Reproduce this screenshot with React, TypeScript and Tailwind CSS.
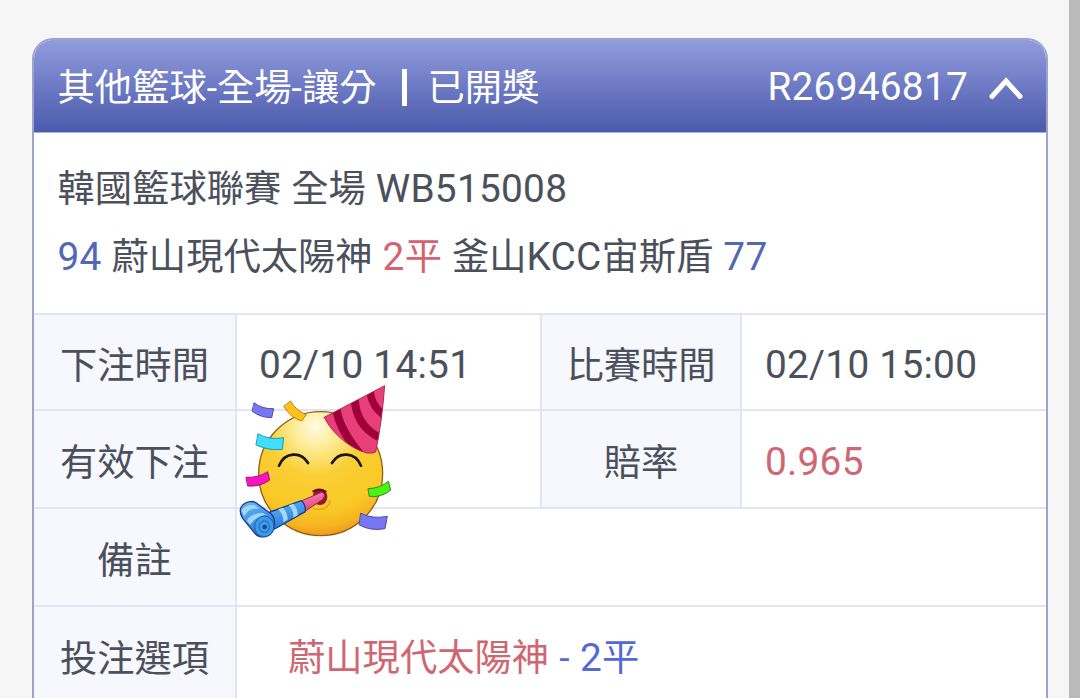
import type { ReactNode } from "react";
import clsx from "clsx";

function Latin({ children }: { children: ReactNode }) {
  return <span className="text-[38.8px] tracking-[0.25px]">{children}</span>;
}

function Label({ children, divided }: { children: ReactNode; divided?: boolean }) {
  return (
    <div
      className={clsx(
        "flex items-center justify-center border-t-2 border-[#e2e5f1] bg-[#f6f8fd] pt-[10px]",
        divided && "border-l-2",
      )}
    >
      {children}
    </div>
  );
}

function Value({ children, className }: { children?: ReactNode; className?: string }) {
  return (
    <div className={clsx("relative flex items-center border-l-2 border-t-2 border-[#e2e5f1] pt-1.5", className)}>
      {children}
    </div>
  );
}

function PartyFace() {
  return (
    <svg
      viewBox="0 0 540 510"
      className="pointer-events-none absolute -left-[7px] -top-9 z-10 h-[170px] w-[180px] max-w-none"
      strokeLinejoin="round"
      strokeLinecap="round"
    >
      <defs>
        <radialGradient id="face" cx="0.46" cy="0.12" r="0.94">
          <stop offset="0" stopColor="#fffbe0" />
          <stop offset="0.2" stopColor="#fdeb92" />
          <stop offset="0.42" stopColor="#f9cf34" />
          <stop offset="0.72" stopColor="#f9c926" />
          <stop offset="0.86" stopColor="#f7b321" />
          <stop offset="1" stopColor="#ea8212" />
        </radialGradient>
        <linearGradient id="blower" x1="0" y1="0" x2="0.4" y2="1">
          <stop offset="0" stopColor="#6db9f5" />
          <stop offset="1" stopColor="#247bdc" />
        </linearGradient>
        <linearGradient id="tip" x1="0" y1="0" x2="0.4" y2="1">
          <stop offset="0" stopColor="#fb93b8" />
          <stop offset="1" stopColor="#df3f7c" />
        </linearGradient>
        <clipPath id="hat">
          <path d="M283 127 L464 32 Q456 140 437 231 Q428 236 410 234 C366 222 308 180 283 127Z" />
        </clipPath>
      </defs>

      <circle cx="272" cy="296" r="186" fill="url(#face)" stroke="#8f6215" strokeWidth="4" />

      <g clipPath="url(#hat)">
        <rect x="275" y="25" width="200" height="220" fill="#e83f78" />
        <g fill="none" stroke="#9f0038" strokeLinecap="butt">
          <path d="M318 98 C325 145 350 190 389 236" strokeWidth="25" />
          <path d="M374 70 C376 120 400 162 447 187" strokeWidth="24" />
          <path d="M420 48 C424 85 440 107 468 124" strokeWidth="22" />
        </g>
      </g>
      <path
        d="M283 127 L464 32 Q456 140 437 231 Q428 236 410 234 C366 222 308 180 283 127Z"
        fill="none"
        stroke="#b02a58"
        strokeWidth="3"
      />

      <g fill="none" stroke="#211509" strokeWidth="8">
        <path d="M147 272 C165 229 214 229 234 264" />
        <path d="M306 264 C326 229 375 229 393 272" />
      </g>

      <path d="M250 401 Q294 410 301 377" fill="none" stroke="#dba31f" strokeWidth="4" />
      <ellipse cx="270" cy="366" rx="22" ry="24" fill="#98142d" />
      <path d="M250 349 Q268 337 287 350" fill="none" stroke="#5e1013" strokeWidth="6" />

      <path d="M214 378 L274 352 Q285 354 283 365 Q281 373 273 377 L225 409Z" fill="url(#tip)" stroke="#9e2456" strokeWidth="3" />
      <path d="M120 411 L214 377 Q228 388 226 410 L134 462 L105 435Z" fill="url(#blower)" stroke="#173f88" strokeWidth="4" />
      <path d="M145 403 L159 398 Q173 415 173 434 L160 442 Q162 422 145 403Z M176 391 L190 386 Q204 402 203 421 L190 428 Q193 408 176 391Z" fill="#a4d8fb" />
      <path
        d="M38 430 C22 404 34 382 64 379 Q72 379 80 385 L124 417 Q136 430 133 453 C130 479 108 490 87 484 Q78 480 72 472Z"
        fill="url(#blower)"
        stroke="#173f88"
        strokeWidth="4"
      />
      <path d="M34 407 Q46 388 73 390 L88 401 Q56 397 43 424Z M50 437 Q62 416 96 413 L108 419 Q74 427 61 449Z" fill="#9fd4fb" />
      <ellipse cx="103" cy="454" rx="29" ry="31" fill="#3f9ae8" stroke="#1d60b2" strokeWidth="3" />
      <ellipse cx="103" cy="455" rx="16" ry="17" fill="none" stroke="#2a76cb" strokeWidth="4" />
      <circle cx="104" cy="456" r="7" fill="#174c94" />

      <g strokeWidth="3">
        <path d="M73 84 Q98 103 131 101 L125 128 Q91 128 67 109Z" fill="#7777f2" stroke="#4e4cab" />
        <path d="M182 79 Q198 107 229 119 L215 138 Q181 128 162 95Z" fill="#fec21a" stroke="#cd7a0b" />
        <path d="M85 177 Q117 196 161 188 L157 223 Q116 228 79 210Z" fill="#40dfff" stroke="#159caf" />
        <path d="M49 307 Q85 309 113 290 L119 315 Q91 336 54 333Z" fill="#fb13c4" stroke="#a30c83" />
        <path d="M415 341 Q451 340 475 319 L482 345 Q454 369 419 364Z" fill="#4bf413" stroke="#278c13" />
        <path d="M393 415 Q428 433 472 424 L465 461 Q422 469 388 450Z" fill="#7777f2" stroke="#4e4cab" />
      </g>
    </svg>
  );
}

export default function App() {
  return (
    <div className="flex h-[698px] w-[1080px] overflow-hidden bg-[#f6f6f6] font-['Roboto','Noto_Sans_CJK_TC',sans-serif] text-[37.3px] leading-none text-[#4b505c]">
      <main className="flex-1 pl-8 pt-[38px]">
        <section className="h-[720px] w-[1016px] overflow-hidden rounded-t-[21px] border-2 border-[#9ba4cf] bg-white">
          <header className="flex h-[93px] items-center whitespace-nowrap border-b border-[#a9b1df] bg-linear-to-b from-[#929bdd] to-[#4b5aab] pl-[23.5px] pr-[23px] pt-1 text-white">
            <span className="pt-0.5">其他籃球-全場-讓分</span>
            <span className="mb-0.5 ml-[25px] mr-[21px] h-[37px] w-[5px] bg-white" />
            <span className="pt-0.5">已開獎</span>
            <span className="ml-auto pb-0.5">
              <Latin>R26946817</Latin>
            </span>
            <svg width="34" height="24" viewBox="0 0 34 24" className="ml-[21px]" fill="none">
              <path d="M3 20.5 17 5 31 20.5" stroke="white" strokeWidth="5" strokeLinecap="round" />
            </svg>
          </header>

          <div className="flex h-[180px] flex-col whitespace-pre pl-[23.5px] pt-[22px] leading-[68px] [word-spacing:0.7px]">
            <div className="h-[68px]">
              韓國籃球聯賽 全場 <Latin>WB515008</Latin>
            </div>
            <div className="h-[68px]">
              <span className="text-[#5268b4]">
                <Latin>94</Latin>
              </span>{" "}
              蔚山現代太陽神{" "}
              <span className="text-[#d46370]">
                <Latin>2</Latin>平
              </span>{" "}
              釜山<Latin>KCC</Latin>宙斯盾{" "}
              <span className="text-[#5268b4]">
                <Latin>77</Latin>
              </span>
            </div>
          </div>

          <div className="grid grid-cols-[201px_305px_200px_306px] grid-rows-[96px_98px_98px_98px] whitespace-pre">
            <Label>下注時間</Label>
            <Value className="pl-[22px]">
              <Latin>02/10 14:51</Latin>
            </Value>
            <Label divided>比賽時間</Label>
            <Value className="pl-[23px]">
              <Latin>02/10 15:00</Latin>
            </Value>

            <Label>有效下注</Label>
            <Value>
              <PartyFace />
            </Value>
            <Label divided>賠率</Label>
            <Value className="pl-[23px] text-[#cf6672]">
              <Latin>0.965</Latin>
            </Value>

            <Label>備註</Label>
            <Value className="col-span-3" />

            <Label>投注選項</Label>
            <Value className="col-span-3 pl-[51px]">
              <span className="pt-0.5 text-[#d06672]">蔚山現代太陽神</span>
              <span className="text-[#5369d3] [word-spacing:1px]">
                {" "}
                - <Latin>2</Latin>平
              </span>
            </Value>
          </div>
        </section>
      </main>
      <div className="w-[11px] bg-[#bababa]" />
    </div>
  );
}
